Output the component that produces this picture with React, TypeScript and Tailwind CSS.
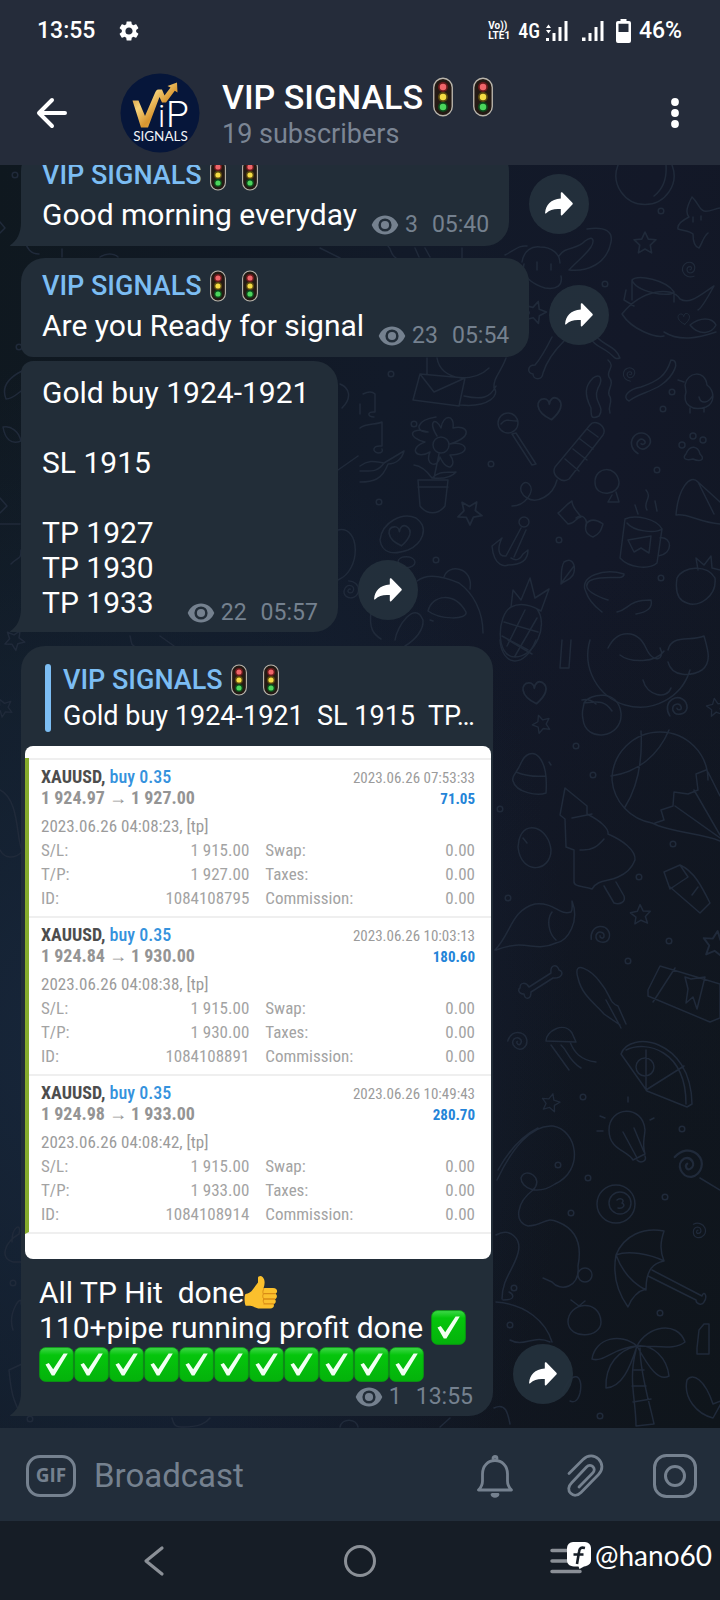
import type { ReactNode } from "react";

const META = "text-[#75818f]";

function TrafficLight({ className }: { className: string }) {
  return (
    <svg viewBox="0 0 32 32" className={className} role="img" aria-label="traffic light">
      <rect x="8.6" y="1" width="14.8" height="30" rx="7.4" fill="#241a14" stroke="#b9b5ac" strokeWidth="1.1" />
      <circle cx="16" cy="8" r="4" fill="#6b1a1c" />
      <circle cx="16" cy="16" r="4" fill="#5a4a10" />
      <circle cx="16" cy="24" r="4" fill="#0d4a1c" />
      <circle cx="16" cy="8" r="2.6" fill="#f0666a" />
      <circle cx="16" cy="16" r="2.6" fill="#f5dc44" />
      <circle cx="16" cy="24" r="2.6" fill="#4bd65c" />
    </svg>
  );
}

function ChannelName() {
  return (
    <div className="flex h-9 items-center whitespace-nowrap text-[27px] font-medium leading-9 text-[#7cbdf3]">
      VIP SIGNALS
      <TrafficLight className="size-8" />
      <TrafficLight className="size-8" />
    </div>
  );
}

function Meta({ views, time }: { views: number; time: string }) {
  return (
    <div className={`-mb-1.5 flex h-[26px] shrink-0 items-center text-[23px] leading-[26px] ${META}`}>
      <svg viewBox="0 0 28 20" className="mr-1.5 h-5 w-7" aria-label="views">
        <path
          fill="currentColor"
          fillRule="evenodd"
          d="M14 .5C8 .5 3 4.300.7 10 3 15.700 8 19.500 14 19.500S25 15.700 27.300 10C25 4.300 20 .5 14 .5Zm0 2.900a6.600 6.600 0 1 1 0 13.200 6.600 6.600 0 0 1 0-13.200Z"
        />
        <circle cx="14" cy="10" r="4.100" fill="currentColor" />
      </svg>
      <span>{views}</span>
      <time className="ml-3.5">{time}</time>
    </div>
  );
}

function Tail() {
  return (
    <svg viewBox="0 0 12 24" className="absolute bottom-0 -left-[11px] h-6 w-3 text-[#222d38]" aria-hidden="true">
      <path fill="currentColor" d="M12 0H11C11 11 7 19 0 23.200 0 23.700.5 24 1 24H12Z" />
    </svg>
  );
}

function ShareButton() {
  return (
    <button
      type="button"
      aria-label="Share message"
      className="mb-3 flex size-[60px] shrink-0 items-center justify-center rounded-full bg-[#24303c]/95"
    >
      <svg viewBox="0 0 28 24" className="h-6 w-7" aria-hidden="true">
        <path
          fill="#fff"
          d="M15.800 1.200c0-.9 1-1.300 1.600-.7l10 10.200c.5.600.5 1.400 0 1.900l-10 10.500c-.6.600-1.600.2-1.600-.7v-5.300C9.500 16.600 5 17.500 1.200 21.300c-.5.500-1.200.2-1.100-.5C1 12.800 5.500 7.400 15.800 6.600Z"
        />
      </svg>
    </button>
  );
}

function Row({ className, children }: { className: string; children: ReactNode }) {
  return (
    <article className={`flex items-end gap-5 ${className}`}>
      {children}
      <ShareButton />
    </article>
  );
}

function CheckMark() {
  return (
    <svg viewBox="0 0 35 35" className="size-[35px] shrink-0" role="img" aria-label="check mark">
      <defs>
        <linearGradient id="check" x1="0" y1="0" x2="0" y2="1">
          <stop offset="0" stopColor="#3fd84a" />
          <stop offset=".22" stopColor="#05c50c" />
          <stop offset="1" stopColor="#04b20b" />
        </linearGradient>
      </defs>
      <rect x=".6" y=".6" width="33.800" height="33.800" rx="6" fill="url(#check)" stroke="#0a9a12" strokeWidth=".8" />
      <path d="M6.500 17.500 9.800 16l4.400 6.200L24.600 6.500h4.200L15.400 28.500h-2.600Z" fill="#f2fff2" />
    </svg>
  );
}

function ThumbsUp() {
  return (
    <svg viewBox="0 0 34 35" className="h-[35px] w-[34px]" role="img" aria-label="thumbs up">
      <path
        d="M1.500 19c3-.6 5.700-2 7.300-4.600L14 7.500V3c0-2 3-2.600 4.600-1 2.600 2.700 2.400 6.500 1 11H29c5 0 5 5.200 2.300 5.700 2.400 1 2 5-.4 5.500 1.600 1.300 1 4.600-1.300 4.900 1 2.300-.3 4.500-3.200 4.500H16c-4 0-6-2.300-10-2.800-2.300-.3-4 0-4.500-.4C.2 27 .3 20 1.500 19Z"
        fill="#fbc02d"
      />
      <path d="M20 18.600h11M20 24h10.600M20 28.900h9.400" stroke="#d98b16" strokeWidth="1.300" fill="none" strokeLinecap="round" />
      <path d="M20 13c-1 2.300-1.600 4.500-.6 6-1 1.500-.8 3.600.4 4.800-1 1.500-.6 3.600.6 4.800" stroke="#d98b16" strokeWidth="1" fill="none" />
    </svg>
  );
}

type Trade = { to: string; from: string; closed: string; profit: string; opened: string; id: string };

const trades: Trade[] = [
  { from: "1 924.97", to: "1 927.00", closed: "2023.06.26 07:53:33", profit: "71.05", opened: "2023.06.26 04:08:23", id: "1084108795" },
  { from: "1 924.84", to: "1 930.00", closed: "2023.06.26 10:03:13", profit: "180.60", opened: "2023.06.26 04:08:38", id: "1084108891" },
  { from: "1 924.98", to: "1 933.00", closed: "2023.06.26 10:49:43", profit: "280.70", opened: "2023.06.26 04:08:42", id: "1084108914" },
];

function TradeCard({ trade }: { trade: Trade }) {
  const rows = [
    ["S/L:", "1 915.00", "Swap:", "0.00"],
    ["T/P:", trade.to, "Taxes:", "0.00"],
    ["ID:", trade.id, "Commission:", "0.00"],
  ];
  return (
    <section className="flex h-[158px] flex-col border-t-2 border-[#efefef] pl-3 pr-4 pt-1.5">
      <div className="flex justify-between">
        <div className="text-[18px] font-bold leading-[21px]">
          <p className="text-[#4d4d4d]">
            XAUUSD, <span className="font-medium text-[#3592dd]">buy 0.35</span>
          </p>
          <p className="flex items-center text-[#949494]">
            {trade.from}
            <span className="mx-1 text-[18px]">→</span>
            {trade.to}
          </p>
        </div>
        <div className="pt-0.5 text-right text-[15px] leading-[21px]">
          <p className="text-[#9b9b9b]">{trade.closed}</p>
          <p className="font-bold text-[#2484d8]">{trade.profit}</p>
        </div>
      </div>
      <p className="mt-1 text-[17px] leading-6 text-[#9b9b9b]">{trade.opened}, [tp]</p>
      <table className="w-full table-fixed text-[17px] leading-6 text-[#a3a3a3]">
        <tbody>
          {rows.map(([a, b, c, d]) => (
            <tr key={a}>
              <th scope="row" className="w-[14%] p-0 text-left font-normal">{a}</th>
              <td className="w-[34%] p-0 text-right">{b}</td>
              <th scope="row" className="w-[32%] p-0 pl-4 text-left font-normal">{c}</th>
              <td className="p-0 text-right">{d}</td>
            </tr>
          ))}
        </tbody>
      </table>
    </section>
  );
}

const stars = [
  [645, 243, 11], [535, 312, 11], [470, 512, 12], [542, 724, 9], [641, 915, 10], [551, 1103, 9], [15, 640, 10], [4, 708, 9], [716, 708, 9], [716, 945, 13],
];
const hearts = [[550, 409, 12], [400, 536, 11], [535, 693, 12], [684, 319, 6]];
const spirals = [[690, 269, 8], [630, 374, 7], [642, 443, 11], [678, 708, 11], [601, 936, 10], [518, 1042, 10], [688, 1165, 15], [698, 1231, 8], [350, 590, 9]];
const dots = [
  [661, 211], [605, 284], [391, 374], [414, 424], [491, 464], [657, 470], [663, 409], [672, 392], [379, 502], [436, 560], [559, 540], [661, 578],
  [576, 746], [593, 775], [500, 809], [673, 844], [639, 877], [508, 898], [669, 941], [628, 961], [583, 1097], [682, 1129], [558, 1165], [588, 1178],
  [665, 1197], [571, 1213], [514, 1288], [660, 1313], [510, 1325], [600, 1416], [15, 175], [19, 347], [13, 1283], [30, 1419],
];

const doodles = [
  // planet and starfish
  "M618 165a29 29 0 1 0 54 0M666 165c1 14-3 24-12 31",
  "M692 197c-5 9-7 16-3 20-8 4-12 8-11 12 7 2 12 2 15 5 0 8 2 13 6 14 3-4 4-11 9-15M692 197c6 5 7 13 12 14s10-2 16-3M693 217v5M701 216v4",
  // sitting animal and its bow
  "M522 262c2-12 10-16 18-15 12 0 20 7 20 16M524 264c-3 12 8 20 21 24 12 2 18-3 16-12M559 256c6-10 18-6 26-15 8-6 10-1 6 6-6 9-14 14-22 23 18 2 38-6 42-28 2-10-5-16-24-13M537 262v8M551 264v6M505 255c10-5 14-10 22-9",
  // drum and fish
  "M632 280c6-6 34 0 42 12-4 6-38 0-42-12M632 280v20M674 292v10M626 290l-2 10 10 6M622 314c20-25 50-28 58-15 10 6 20-4 34-13-8 14-12 22-16 24M622 314c10 16 34 24 42 22M664 332c16 10 34 6 52 0M690 325c10-8 22-8 26 0-4 8-16 12-26 0",
  // bone and streamers
  "M552 337c-6 12-10 20-17 28-8 0-8 8-2 9 0 6 9 7 10-1 4-13 12-23 21-32M596 336c8 10 20 10 24 22-6 2-6-2-12-6-7-5-14-7-16-12",
  "M593 378c8-6 10 2 5 10-6 14 8 18 1 28-8 4-8 0-8-8-7-14-6-22 2-30M608 360c8 7-2 10 1 17 6 7-2 12 0 18 5 7-2 10 1 18M671 360c10 0 3 16-10 25-12 8-22 8-32 16-8-4 0-12 12-14 17-6 25-11 30-27",
  // envelope and jug
  "M420 374l45 4-6 28-46-6ZM420 374l14 18 31-14M427 358v16M437 358c2 12 10 18 24 20 13 0 22-4 28-10M506 358c-5 14-13 20-12 30 6 6-4 20-34 17M496 386c-6 12-14 14-32 10",
  // chick
  "M685 385c2-13 20-16 22 0 8 6 8 18-1 22-14 5-24-3-20-15ZM684 382l-6-2M699 397c2 8 10 6 14-2M690 408v5M704 408v4",
  // notes
  "M363 394c6-3 10-2 12 0v18c-8-1-8 5-1 5M360 428c6-5 16-3 22-6v24c-10-1-10 6-4 7 4 0 5-2 4-4M360 404v10",
  // flower in a pot
  "M441 445m-8 0a8 8 0 1 0 16 0a8 8 0 1 0-16 0M437 436c-9-14-2-20 4-8 2-14 14-14 12 0 14-4 22 8-3 16 16-4 24 10 0 11 8 10-2 20-10 2-2 12-16 8-10-5-14 8-22-4-5-10-18-4-16-16 3-10-14 0-12-12 8-15M439 454l-5 24M418 480h30l-3 26c-7 9-18 9-25 0ZM418 487h30M414 465c8 1 13 6 18 13M432 478c8-8 14-5 24-6-5 6-14 7-24 6",
  // lollipop and firecracker
  "M498 423a10 10 0 1 0 20 0a10 10 0 1 0-20 0M501 424c6-7 10-2 17-3M516 433l20 31-4 1-20-31ZM590 425c5-7 18 2 13 10l-34 44c-7 5-18-4-14-12ZM565 459l14 12M573 449l14 11M580 439l13 10M587 429l11 8M557 480c-4 16-20 24-30 18-12-7-4-20 2-14 7 7-4 22-17 22",
  // bird and brush
  "M360 466c10-7 16-4 24-3l20-12c-2 8-8 13-16 13-6 16-15 18-28 18M384 463c-6 9-12 8-24 8",
  // round cat, bow and paw
  "M595 482c0-16 22-17 24 0 1 13-24 17-24 0M612 495l-4 7h11l-3-10M558 513c4-2 7-8 14-12 0 7 6 11 9 16-6 1-6 7-13 7ZM576 518c6-5 12 1 10 8M586 524c6-8 14-2 17 0-2 6-3 10-10 13-8-3-8-8-7-13",
  "M686 454c4-10 12-8 14 0 6 6 0 8-7 5-8 2-11-1-7-5M679 445a3 3 0 1 0 6 0a3 3 0 1 0-6 0M690 436a3 3 0 1 0 6 0a3 3 0 1 0-6 0M700 440a3 3 0 1 0 6 0a3 3 0 1 0-6 0",
  // thought bubble and anchor
  "M380 540c2-18 22-28 36-22 14 10 6 26-8 32-14 5-26 4-28-10M398 562c0-7 16-7 17 0 0 7-17 8-17 0",
  "M519 522a5 5 0 1 0 10 0a5 5 0 1 0-10 0M521 528l-15 28M526 530l-12 27M506 556c-8 1-9-8-4-18l-10 8c2 22 14 20 16 19 12 0 20-4 20-15l-5 4c-3 6-7 7-12 4",
  // mug, wedge and strawberry
  "M625 519c10-5 32 0 37 10l-5 34c-8 7-28 5-37-5ZM627 523c6 8 28 11 35 6M660 538c12-2 14 16-2 18M628 540l23-4-2 17-8-5-7 4ZM635 505l3 9M646 490c7 8-4 12 1 20M655 501l2 10M676 515c2-26 14-42 22-33l22 20M676 515c12-2 22 7 44 9M698 482l16 32",
  "M677 578c6-12 30-14 38 0 2 18-16 30-28 25-10-3-12-12-10-25M698 570l-2-12 8 7 7-9 1 12 8 2M564 562c10-6 12 6 9 13-4 6-8 5-12 9 1-8-1-15 3-22M562 582l12-16",
  // panda and pineapple
  "M417 581c10-8 26-5 42 2 14 10 24 28 24 50M444 577c4-14 30-10 26 12M428 611c4-16 26-20 38 1 2 8-26 8-38-1M395 640c2-14 20-40 28-20 1 10-8 20-18 26M430 620l3 1M371 612c-2 16 2 22 10 27",
  "M511 607l2-17 8 10 9-22 5 20 14-9-8 22c-10-6-20-9-30-4ZM511 607c-14 8-16 50 4 50s34-32 22-48M504 622l34 10M502 636l26 14M525 610l-18 36M537 618l-22 38",
  // cat in a ring
  "M608 600c-30-10-24-20-8-22 14-2 24 2 24-4-20-6-46 2-38 18 4 12 14 18 16 20M617 612c12-2 10-12 34-12 2 8-4 12-15 14M590 640a44 44 0 0 0 100 30M608 648c10-20 30-18 38 0s20 10 14 0M620 655c10 8 36 8 44-4M668 650c4-16 22-8 36-14 4 14 8 26-2 34-10 6-30 8-34-8M643 680c4 16 24 20 28 8",
  // rugby ball and candy
  "M500 640c2 26 24 30 36 0M508 640l24 14M562 640l-2 28h9l2-28",
  // peach and bell
  "M584 703c6-10 34-14 37 10 2 26-36 30-38 6-2-8 1-12 1-16M584 703c12-1 20-4 28 8M582 700c6-2 12 2 14 4M513 781c-2-5 4-8 8-18 4-9 12-13 18-6 7 8 8 22 7 36-8 3-30 0-33-12M516 772c10 4 20 5 30 4M549 762l2 3",
  // parachute ball
  "M612 780a48 48 0 1 1 96 0M612 780a48 48 0 0 0 40 43M641 731c2 36-6 60-16 76M669 730c-10 24-30 42-58 46M706 770l-10 4 2 16-10 4-14-2-1 14-12 4 3 10-9 3M652 823c20 10 50 10 68 18M675 806l45 32M694 790l26 45M708 772l12 24",
  // tree
  "M565 788l22 18v8c12 6 22 14 21 20 14 6 28 16 27 26-3 8-10 14-17 17-10 5-20 2-26 12-8-3-19-2-18-8V850l-8-3-1-28-5-4ZM572 818l20-4M580 850c12 1 18-4 24-11M604 886l10 17c6 2 12-1 10-7l-8-14",
  // egg, fox and torch
  "M519 840c6-22 30-12 32 10 0 22-30 26-33-3ZM523 838l4 5M495 950c16-16 16-40 40-46 20-2 24 12 36 8 2-3 1-6 1-11 8 20-4 40-16 42-22 10-30-5-60 7M552 912c-6 8-3 22 4 28M664 872l16-7 8 12-18 12ZM680 865c14 6 22 22 30 38l-10 10-30-26M692 895l6-8",
  // bone and squid
  "M520 988c0-6 6-6 9-1l22-14c-1-8 6-10 8-3 6 2 2 9-6 8l-22 14c0 8-6 8-7 2-6 0-6-5-4-6M578 978c-6-20 14-7 22 4 12 14 8 20 18 24l8 18M578 978c4 18 18 26 26 36l16 11M606 1000l15 28",
  // chocolate bar
  "M648 990l12-24 60 18v34l-10 4-62-26ZM660 966l-12 24M675 968l-22 34M685 977l6 2 14-2-8 32-4-12-7 6 2-14Z",
  // jellyfish, pizza and bulb
  "M546 1041c0-10 18-20 26-8l4 9ZM551 1045l18 25M561 1045c8 7 6 14 20 23M570 1042c4 10 10 18 26 20M621 1054c8-24 70-16 71 50l-5 3-40-16ZM626 1050c20-10 60 0 60 54M646 1090v-40M646 1090l38-24M636 1067a9 9 0 1 0 18 0a9 9 0 1 0-18 0",
  "M609 1130c0-24 34-26 36 0-1 12-3 14 0 24l-12 6c-6-10-24-10-24-30M623 1132l14 26M634 1128l10 24M637 1160c4 4 10 1 8-4M628 1102v-5M605 1118l-5-2M650 1120l4-2M603 1131h-6",
  // coils and cord
  "M497 1180c14-30 34-56 56-54 24 4 32 44 2 58-18 12-34 4-34-6 4-12 24 0 12 12-16 12-20 32-5 36 16 0 16-10 30-4 20 8 24 24 20 44 2 22-18 26-26 16l-9-4M498 1170c10-18 24-34 40-42M578 1275a7 7 0 1 0 14 0a7 7 0 1 0-14 0",
  "M597 1204a19 19 0 1 0 38 0a19 19 0 1 0-38 0M609 1203a11 11 0 1 0 22 0a11 11 0 1 0-22 0M617 1200c4-3 8 0 5 3 4 2 1 6-4 5M700 1178l20 12",
  // umbrella
  "M616 1255c8-20 28-28 48-24-4 12-4 20 0 30-10 2-18 8-18 28-8 2-14 8-18 18-10-14-16-30-12-52ZM616 1255c12-5 34-1 48 6M616 1255c6 16 16 28 30 35M652 1270l50 26c2-6 6 0 2 6-2 4-8 2-8-2l-48-24",
  // dinosaur and tomato
  "M496 1235c14-8 26 4 22 18-4 16-16 26-16 46M496 1302c30 2 50 20 56 40M503 1300c14 0 10-6 6-8M510 1340c14 8 24-6 40 2M568 1322c0-20 32-24 33 0 0 16-32 18-33 0M571 1300l8 6 6-5",
  // palm and fish
  "M637 1346c-16-14-42-8-45 13 12 4 22-12 45-13-18 4-32 18-31 42 16-1 24-20 31-42 16-2 30 12 32 30-10 6-20-8-32-30 10-20 40-26 48-4-10 8-24 4-48 4M636 1350c-8 30 0 50 0 76l18-2c-4-20-14-50-14-76M634 1370h10M632 1386h14M633 1402l18-3M704 1324h5v30h-12v-6l2-18Z",
  "M687 1380c6-8 18 0 26 24l10-4-10 18c-16-4-30-20-26-38M494 1408c12-6 14 6 16 16M562 1395c10-28 22-20 18-2-2 8-6 10-10 8",
  // left edge
  "M0 222l5 6-5 5M23 236c4 14 8 18 16 18M62 249v8M100 257c6-4 14-4 18 0M22 371c-16 8-20 18-16 28 6 0 10-4 15-8M3 427c8-2 16 5 18 14-10 4-16-2-18-14M0 498l7 8-7 7M0 524h20M11 564c8-8 10-4 10-14M0 790c20 10 16 50 22 60M0 850c5 9 14 9 22 2M12 1242c0-16 10-20 7-8-14 8-20 24-6 28h9M13 1330c-6-18 10-38 8-26M9 1370l13-6M9 1370c2 22 4 30 12 45",
  // gaps between bubbles
  "M130 636c2 6 0 8 4 10M160 636l14 10M320 248l20 10M388 246c4 4 2 8 8 12M415 248l4 9M425 248l5 9M462 248v10M172 1418c2 8 4 9 10 9 18 0 24-4 28-9M340 1427c2-9 16-9 18 0M440 1427l10-9M340 384c10 4 12 14 2 24M338 470l20-14M338 530c22-5 24 40 0 50",
];

function Wallpaper() {
  return (
    <svg
      viewBox="0 165 720 1263"
      preserveAspectRatio="xMidYMax slice"
      className="absolute inset-0 size-full"
      fill="none"
      stroke="#202a3a"
      strokeWidth="1.500"
      strokeLinejoin="round"
      strokeLinecap="round"
      aria-hidden="true"
    >
      {doodles.map((d, i) => (
        <path key={i} d={d} />
      ))}
      {stars.map(([x, y, r], i) => (
        <path
          key={i}
          transform={`translate(${x} ${y}) scale(${r / 10}) rotate(${i * 17})`}
          d="M0-10 3-3.500 10-3 4.800 2 6 9 0 5.500-6 9-4.800 2-10-3-3-3.500Z"
        />
      ))}
      {hearts.map(([x, y, r], i) => (
        <path
          key={i}
          transform={`translate(${x} ${y}) scale(${r / 10}) rotate(-8)`}
          d="M0 9C-14 0-10-10-4-9-1-9 0-6 0-4 1-8 4-10 7-8 13-3 8 4 0 9Z"
        />
      ))}
      {spirals.map(([x, y, r], i) => (
        <path
          key={i}
          transform={`translate(${x} ${y}) scale(${r / 10}) rotate(${i * 25})`}
          d="M0 1C2 1 3-3 0-3-5-3-5 4 0 5 7 5 8-5 2-8-5-10-11-4-9 3-7 9-1 11 5 9"
        />
      ))}
      {dots.map(([x, y], i) => (
        <circle key={i} cx={x} cy={y} r="2.800" />
      ))}
    </svg>
  );
}

function StatusBar() {
  return (
    <div className="flex h-[60px] items-center justify-between pl-[37px] pr-[38px] pt-0.5 text-[23px] font-medium text-white">
      <div className="flex items-center gap-6">
        <time>13:55</time>
        <svg viewBox="2 2 20 20" className="size-5" fill="#fff" aria-label="settings">
          <path d="M19.140 12.940c.04-.3.060-.61.060-.94 0-.32-.02-.64-.07-.94l2.030-1.580a.49.490 0 0 0 .12-.61l-1.920-3.320a.488.488 0 0 0-.59-.22l-2.390.96c-.5-.38-1.030-.7-1.620-.94l-.36-2.540a.484.484 0 0 0-.48-.41h-3.840c-.24 0-.43.170-.47.410l-.36 2.540c-.59.240-1.130.570-1.620.940l-2.390-.96a.49.490 0 0 0-.59.220L2.740 8.870c-.12.210-.08.470.120.610l2.030 1.580c-.05.300-.09.630-.09.940s.02.640.070.940l-2.030 1.580a.49.490 0 0 0-.12.610l1.920 3.320c.12.220.370.290.590.220l2.390-.96c.5.380 1.030.700 1.620.940l.36 2.540c.05.240.240.410.480.410h3.840c.24 0 .44-.17.470-.41l.36-2.540c.59-.24 1.130-.56 1.620-.94l2.390.96c.22.080.470 0 .59-.22l1.920-3.320a.49.490 0 0 0-.12-.61l-2.010-1.580ZM12 15.600A3.610 3.610 0 0 1 8.400 12c0-1.980 1.620-3.600 3.600-3.600s3.600 1.620 3.600 3.600-1.620 3.600-3.600 3.600Z" />
        </svg>
      </div>
      <div className="flex items-center">
        <div className="mr-2 flex flex-col text-[10px] font-bold leading-[10px]">
          <span>Vo))</span>
          <span>LTE1</span>
        </div>
        <span className="mr-1.5 font-['Roboto_Condensed','Roboto',sans-serif] text-[20px]">4G</span>
        <svg viewBox="0 0 22 20" className="mr-3.5 h-5 w-[22px]" fill="#fff" aria-label="signal">
          <path d="M0 17h3v3H0ZM6.500 12h3v8h-3ZM12.500 6h3v14h-3ZM18.500 0h3v20h-3ZM2.500 3.500 5 7H0ZM0 9h5l-2.500 3.500Z" />
        </svg>
        <svg viewBox="0 0 22 20" className="mr-3 h-5 w-[22px]" fill="#fff" aria-label="signal">
          <path d="M0 16.500h3.500V20H0ZM6.500 12h3v8h-3ZM12.500 6h3v14h-3ZM18.500 0h3v20h-3Z" />
        </svg>
        <svg viewBox="0 0 15 24" className="mr-2 h-6 w-[15px]" fill="#fff" aria-label="battery">
          <path fillRule="evenodd" d="M4.500 0h6v2H13a2 2 0 0 1 2 2v18a2 2 0 0 1-2 2H2a2 2 0 0 1-2-2V4a2 2 0 0 1 2-2h2.500ZM2.500 4.700V13h10V4.700Z" />
        </svg>
        <span>46%</span>
      </div>
    </div>
  );
}

function Avatar() {
  return (
    <svg viewBox="0 0 80 80" className="size-20 shrink-0" role="img" aria-label="VIP Signals logo">
      <defs>
        <linearGradient id="gold" x1="0" y1="0" x2="1" y2="1">
          <stop offset="0" stopColor="#b9741c" />
          <stop offset=".35" stopColor="#f6d27a" />
          <stop offset=".6" stopColor="#d8952f" />
          <stop offset="1" stopColor="#f4cc74" />
        </linearGradient>
      </defs>
      <circle cx="40" cy="40" r="39.500" fill="#06163a" />
      <text y="54" fontFamily="Roboto, sans-serif" fontWeight="300" fill="#fff">
        <tspan x="38" fontSize="32">i</tspan>
        <tspan x="46" fontSize="37">P</tspan>
      </text>
      <path
        fill="url(#gold)"
        d="M12.500 27.500H18.500l6.500 15.500 9.500-22c1-2.500 2-4.500 4-4.500h3.500l2.500 6 6-8-3-1.500L57 9.500l.5 10-2.700-1.700L46 29.500h-4l-2.500-5.500L28 54.500h-7Z"
      />
      <text x="40.500" y="67.500" fontFamily="Lato, sans-serif" fontSize="13.500" fill="#f1f3f7" textAnchor="middle">
        SIGNALS
      </text>
    </svg>
  );
}

export default function App() {
  return (
    <div className="relative flex h-screen flex-col overflow-hidden bg-[#111925] font-['Roboto',sans-serif]">
      <header className="relative z-10 bg-[#252c3a] text-white">
        <StatusBar />
        <div className="flex h-[105px] items-center pl-9 pr-9">
          <button type="button" aria-label="Back" className="mr-[52px]">
            <svg viewBox="0 0 32 32" className="size-8" fill="none" stroke="#fff" strokeWidth="4" strokeLinecap="round" strokeLinejoin="round">
              <path d="M29 16H3.500M16 3 3 16l13 13" />
            </svg>
          </button>
          <Avatar />
          <div className="ml-[22px] min-w-0 flex-1 pt-0.5">
            <h1 className="flex h-10 items-center whitespace-nowrap text-[34px] font-medium leading-10">
              VIP SIGNALS
              <TrafficLight className="size-10" />
              <TrafficLight className="size-10" />
            </h1>
            <p className="text-[27px] leading-[34px] text-[#7b8594]">19 subscribers</p>
          </div>
          <button type="button" aria-label="More options">
            <svg viewBox="0 0 18 32" className="h-8 w-[18px]" fill="#fff">
              <circle cx="9" cy="5" r="3.900" />
              <circle cx="9" cy="16" r="3.900" />
              <circle cx="9" cy="27" r="3.900" />
            </svg>
          </button>
        </div>
      </header>

      <main className="relative flex min-h-0 flex-1 flex-col justify-end overflow-hidden bg-[linear-gradient(100deg,#0f181f_0%,#121a29_45%,#131828_70%,#111722_100%)]">
        <div className="absolute inset-0 bg-[radial-gradient(ellipse_at_10%_70%,#17263a_0%,transparent_55%),radial-gradient(ellipse_at_100%_100%,#0f151b_0%,transparent_50%)]" />
        <Wallpaper />
        <div className="relative flex shrink-0 flex-col pb-3 pl-[21px] text-[30px] leading-[35px] text-white">
          <Row className="mb-3">
            <div className="relative rounded-3xl rounded-bl-none bg-[#222d38] pb-3.5 pl-[21px] pr-5 pt-2.5">
              <ChannelName />
              <div className="mt-1 flex items-end gap-3.5 whitespace-nowrap">
                <p>Good morning everyday</p>
                <Meta views={3} time="05:40" />
              </div>
              <Tail />
            </div>
          </Row>

          <Row className="mb-1">
            <div className="relative rounded-3xl rounded-bl-xl bg-[#222d38] pb-3.5 pl-[21px] pr-5 pt-2.5">
              <ChannelName />
              <div className="mt-1 flex items-end gap-3.5 whitespace-nowrap">
                <p>Are you Ready for signal</p>
                <Meta views={23} time="05:54" />
              </div>
            </div>
          </Row>

          <Row className="mb-3.5">
            <div className="relative whitespace-nowrap rounded-3xl rounded-bl-none rounded-tl-xl bg-[#222d38] pb-3 pl-[21px] pr-5 pt-3.5">
              <p>Gold buy 1924-1921</p>
              <br />
              <p>SL 1915</p>
              <br />
              <p>TP 1927</p>
              <p>TP 1930</p>
              <div className="flex items-end justify-between gap-[33px]">
                <p>TP 1933</p>
                <Meta views={22} time="05:57" />
              </div>
              <Tail />
            </div>
          </Row>

          <Row className="">
            <div className="relative w-[472px] rounded-3xl rounded-bl-none bg-[#222d38] pb-3 pl-1 pr-0.5 pt-[18px]">
              <blockquote className="mb-3.5 ml-5 flex h-[68px] gap-3">
                <span className="w-1.5 rounded-sm bg-[#7cbdf3]" />
                <div className="flex flex-col justify-between">
                  <div className="-mt-0.5">
                    <ChannelName />
                  </div>
                  <p className="whitespace-pre text-[27px] leading-8">{"Gold buy 1924-1921  SL 1915  TP…"}</p>
                </div>
              </blockquote>
              <figure>
                <div className="overflow-hidden rounded-lg bg-white pb-[25px] pt-3 font-['Roboto_Condensed','Roboto',sans-serif]">
                  <div className="border-b-2 border-b-[#efefef] border-l-4 border-l-[#86ab2c]">
                    {trades.map((t) => (
                      <TradeCard key={t.id} trade={t} />
                    ))}
                  </div>
                </div>
                <figcaption className="pl-3.5 pt-4">
                  <p className="flex whitespace-pre">
                    {"All TP Hit  done"}
                    <ThumbsUp />
                  </p>
                  <p className="flex gap-2 whitespace-nowrap">
                    110+pipe running profit done
                    <CheckMark />
                  </p>
                  <p className="flex pt-0.5">
                    {Array.from({ length: 11 }, (_, i) => (
                      <CheckMark key={i} />
                    ))}
                  </p>
                </figcaption>
              </figure>
              <div className="flex justify-end pr-[18px] pt-0.5">
                <Meta views={1} time="13:55" />
              </div>
              <Tail />
            </div>
          </Row>
        </div>
      </main>

      <form className="relative flex h-[93px] shrink-0 items-center bg-[#222d3a] pl-[26px] pr-[22px] pt-0.5 text-[#75818f]">
        <button type="button" aria-label="Stickers and GIFs" className="mr-[18px] flex h-[42px] w-[50px] shrink-0 items-center justify-center rounded-[14px] border-[3px] border-current font-['Open_Sans',sans-serif] text-[19px] font-bold">
          GIF
        </button>
        <input
          type="text"
          aria-label="Broadcast"
          placeholder="Broadcast"
          className="min-w-0 flex-1 bg-transparent text-[33px] leading-10 outline-none placeholder:text-[#75818f]"
        />
        <div className="flex shrink-0 items-center">
          <button type="button" aria-label="Notifications" className="mr-[52px]">
            <svg viewBox="0 0 38 44" className="h-11 w-[38px]" fill="none" stroke="currentColor" strokeWidth="2.800" strokeLinejoin="round" strokeLinecap="round">
              <path d="M2.500 36h33c-3-3-4-5-4-9v-7c0-8-5.500-13.500-12.500-13.500S6.500 12 6.500 20v7c0 4-1 6-4 9Z" />
              <path d="M17 4.500a2 2 0 0 1 4 0" fill="currentColor" />
              <path d="M16 40.500h6c-.5 2.300-5.500 2.300-6 0Z" fill="currentColor" />
            </svg>
          </button>
          <button type="button" aria-label="Attach" className="mr-[46px]">
            <svg viewBox="0 0 40 44" className="h-11 w-10" fill="none" stroke="currentColor" strokeWidth="2.800" strokeLinecap="round">
              <path d="M3 19.500 17 5.500c5-5 11.500-4.500 15.500-.5s5 10.500 0 15.500L15 38.500c-3.500 3.500-7.500 3.500-10.300.8s-2.700-7 .8-10.400L20.500 13c2-2 4.800-2 6.500-.3s1.700 4.300-.3 6.300L13 33" />
            </svg>
          </button>
          <button type="button" aria-label="Camera">
            <svg viewBox="0 0 46 46" className="size-[46px]" fill="none" stroke="currentColor" strokeWidth="3">
              <rect x="2.500" y="2.500" width="41" height="41" rx="12" />
              <circle cx="23" cy="23" r="9.500" />
            </svg>
          </button>
        </div>
      </form>

      <nav className="relative grid h-[79px] shrink-0 grid-cols-[1fr_104px_1fr] items-center bg-[#161d26] text-[#8b9097]">
        <button type="button" aria-label="System back" className="justify-self-center">
          <svg viewBox="0 0 22 32" className="h-8 w-[22px]" fill="none" stroke="currentColor" strokeWidth="3.200" strokeLinecap="round" strokeLinejoin="round">
            <path d="M19 3 3 16l16 13" />
          </svg>
        </button>
        <button type="button" aria-label="Home" className="size-8 justify-self-center rounded-full border-[3px] border-current" />
        <button type="button" aria-label="Recent apps" className="justify-self-center">
          <svg viewBox="0 0 32 26" className="h-[26px] w-8" fill="none" stroke="currentColor" strokeWidth="3.500" strokeLinecap="round">
            <path d="M2 2.500h28M2 13h28M2 23.500h28" />
          </svg>
        </button>
        <div className="absolute right-2 top-4 flex items-center gap-1 font-['Lato',sans-serif] text-[28px] leading-9 text-white">
          <svg viewBox="0 0 24 28" className="h-7 w-6" aria-hidden="true">
            <path fill="#fff" d="M6 1h12a6 6 0 0 1 6 6v12c0 4-3 6-7 6.500L12.500 28l-1-2.500C5 26 0 25 0 19V7a6 6 0 0 1 6-6Z" />
            <path d="M18 7c-4-1-5.500 0-6 4l-2 12M6.500 13.500h10" fill="none" stroke="#161d26" strokeWidth="2.600" />
          </svg>
          @hano60
        </div>
      </nav>
    </div>
  );
}
